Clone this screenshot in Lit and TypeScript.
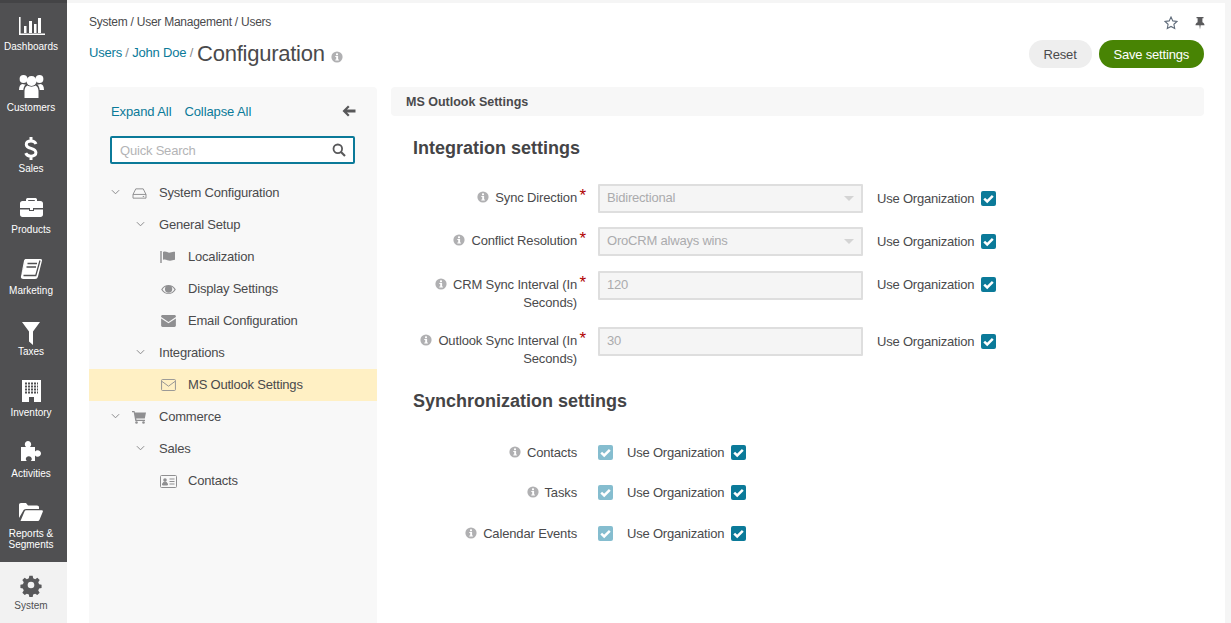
import { LitElement, html, css, svg } from 'lit';
import { customElement } from 'lit/decorators.js';

const info = html`<svg class="info" viewBox="0 0 12 12"><circle cx="6" cy="6" r="5.6" fill="#b0b0b2"/><rect x="5" y="2.4" width="2" height="1.8" fill="#fff"/><path d="M4.3 5h2.8v3.6h.8v1H4.3v-1h.9V6h-.9z" fill="#fff"/></svg>`;

const check = html`<svg viewBox="0 0 15 15"><path d="M3.2 7.6l3 2.9 5.6-5.700" fill="none" stroke="#fff" stroke-width="2.500"/></svg>`;

// drawn on a 32x28 box, centred over the label
const navIcons: Record<string, unknown> = {
  dashboards: svg`<path d="M4.800 7v17.200H30" fill="none" stroke="#fff" stroke-width="1.600"/><path d="M9 16h2.500v7H9zM14 11h3v12h-3zM19 14h2.500v9H19zM23 8h3v15h-3z" fill="#fff"/>`,
  customers: svg`<g fill="#fff"><circle cx="8.500" cy="8" r="3.900"/><circle cx="24.500" cy="8" r="3.900"/><circle cx="16.500" cy="10" r="5"/><path d="M4 19c0-4 1.500-6 3.500-6 1 .6 2.500.6 3.400.2-1.500 1.300-2.400 3.300-2.600 5.800zM29 19c0-4-1.500-6-3.500-6-1 .6-2.500.6-3.400.2 1.500 1.300 2.400 3.300 2.600 5.800z"/><path d="M9.500 27v-7c0-3 1.500-5 3-5.500 2 1.500 6 1.500 8 0 1.500.5 3 2.500 3 5.500v7z"/></g>`,
  sales: svg`<path d="M21 12c-.8-2-2.500-3-5-3-3 0-4.700 1.400-4.700 3.400 0 5 9.600 3 9.600 8.200 0 2.400-2 3.600-5 3.600-2.500 0-4.300-1-5.200-3M16 5v4M16 24v4" fill="none" stroke="#fff" stroke-width="3"/>`,
  products: svg`<path d="M11 8V6.500C11 5.500 12 5 13 5h7c1 0 2 .5 2 1.500V8h-2.200V7h-6.600v1z" fill="#fff"/><path d="M7.500 8h18C27 8 28 9 28 10.500V15H5v-4.500C5 9 6 8 7.500 8zM5 16.500h9V18h5v-1.500h9v5c0 1.500-1 2.500-2.500 2.500h-18C6 24 5 23 5 21.500z" fill="#fff"/><rect x="15" y="15" width="3" height="2" fill="#fff"/>`,
  marketing: svg`<path d="M11 5h14.500c1.300 0 1.800.8 1.400 2L23 22.500c-.5 1.700-1.300 2.500-3 2.500H8.500C6.500 25 5.500 24 6 22z M11 5c-1 0-1.700.6-2 1.700L6.200 21" fill="#fff"/><path d="M12.500 9.500h9.500M11.500 13h9.500M8.500 21.500h12.300L25 6.500" fill="none" stroke="#505052" stroke-width="1.300"/>`,
  taxes: svg`<path d="M7 7h18l-7 9.500V30l-4-3.500V16.500z" fill="#fff"/>`,
  inventory: svg`<path d="M7 4h19v22h-7v-5h-5v5H7z" fill="#fff"/><path d="M10 7.500h13M10 10.500h13M10 13.500h13M10 16.500h13" stroke="#505052" stroke-width="1.800" stroke-dasharray="2 1" fill="none"/>`,
  activities: svg`<path d="M6 10h5c-.8-.8-1.200-1.500-1.200-2.500C9.800 5.500 11.300 4 13 4s3.200 1.500 3.200 3.500c0 1-.4 1.700-1.200 2.500h5v4.500c.8-.8 1.600-1.200 2.500-1.200 2 0 3.500 1.400 3.500 3.200s-1.500 3.200-3.500 3.200c-.9 0-1.700-.4-2.500-1.200V24h-4.200c.7-.7 1-1.400 1-2.100 0-1.500-1.400-2.700-3-2.700s-3 1.200-3 2.700c0 .7.300 1.400 1 2.100H6z" fill="#fff"/>`,
  reports: svg`<path d="M4 21V8c0-1.100.7-2 2-2h5l2 2.500h9c1.200 0 2 .7 2 1.800V12H11c-1.300 0-2.300.7-2.800 1.800z" fill="#fff"/><path d="M5.500 24l4-9.500c.4-.9 1-1.300 2-1.300h15c1.200 0 1.700.7 1.300 1.600l-3.300 7.900c-.4.900-1 1.300-2 1.300z" fill="#fff"/>`,
};

const gear = html`<svg viewBox="0 0 24 24"><path fill="#58585a" fill-rule="evenodd" d="M10 1h4l.6 3 2.400 1 2.600-1.700 2.800 2.800-1.700 2.600 1 2.400 3 .6v4l-3 .6-1 2.400 1.700 2.600-2.800 2.800-2.600-1.700-2.400 1-.6 3h-4l-.6-3-2.400-1-2.600 1.700-2.800-2.800 1.700-2.600-1-2.400-3-.6v-4l3-.6 1-2.400-1.700-2.600 2.800-2.800 2.600 1.700 2.400-1zM12 8a4 4 0 100 8 4 4 0 000-8z"/></svg>`;

const treeIcons: Record<string, unknown> = {
  drive: html`<svg viewBox="0 0 16 14" width="15" height="13"><path d="M4 2h8l3 6v4H1V8zM1 8h14M11.500 10.200h1.500" fill="none" stroke="#8a8a8c" stroke-width="1"/></svg>`,
  flag: html`<svg viewBox="0 0 16 14" width="16" height="14"><path d="M1 1v12" stroke="#8f8f91" stroke-width="1.400"/><path d="M3 2c3-1.500 4.500 1 7 .6 2-.3 3-.8 5-.8v8c-2 0-3 1-5 1-2.500 0-4-2-7-1z" fill="#8f8f91"/></svg>`,
  eye: html`<svg viewBox="0 0 16 12" width="15" height="11"><path fill="#8f8f91" fill-rule="evenodd" d="M0 6c2-3.500 5-5 8-5s6 1.500 8 5c-2 3.500-5 5-8 5S2 9.500 0 6zM1.500 6C3 8.500 5.200 10 8 10s5-1.500 6.500-4C13.600 4.500 12.500 3.400 11.200 2.800c.6.800.9 1.700.9 2.700a4 4 0 11-8 0c0-1 .3-1.900.9-2.700C3.500 3.400 2.400 4.500 1.500 6z"/></svg>`,
  mail: html`<svg viewBox="0 0 16 13" width="15" height="12"><path fill="#8f8f91" d="M0 1.500C0 .7.700 0 1.500 0h13c.8 0 1.500.7 1.500 1.500v.7L8 7.500 0 2.200zM0 3.700l8 5.300 8-5.300v7.800c0 .8-.7 1.500-1.500 1.500h-13C.7 13 0 12.300 0 11.500z"/></svg>`,
  mailo: html`<svg viewBox="0 0 16 13" width="15" height="12"><path d="M1.500.5h13c.6 0 1 .4 1 1v10c0 .6-.4 1-1 1h-13c-.6 0-1-.4-1-1v-10c0-.6.4-1 1-1zM.8 2.500L8 7.800l7.200-5.300" fill="none" stroke="#8f8f91"/></svg>`,
  cart: html`<svg viewBox="0 0 14 13" width="14" height="13"><path fill="#8f8f91" d="M0 0h2.500l.4 1.500H14l-1.200 6H4.200l.3 1.300H13V10H3.300L1.700 1.200H0z"/><circle cx="4.500" cy="11.500" r="1.300" fill="#8f8f91"/><circle cx="11.500" cy="11.500" r="1.300" fill="#8f8f91"/></svg>`,
  card: html`<svg viewBox="0 0 17 13" width="17" height="13"><rect x=".5" y=".5" width="16" height="12" rx="1" fill="none" stroke="#8f8f91"/><circle cx="5" cy="5" r="1.800" fill="#8f8f91"/><path d="M2.500 10c0-2 1-3 2.500-3s2.500 1 2.500 3zM9.500 4h5M9.500 6.500h5M9.500 9h5" fill="#8f8f91" stroke="#8f8f91"/></svg>`,
};

const chevron = html`<svg viewBox="0 0 10 6" width="9" height="6"><path d="M1 1l4 4 4-4" fill="none" stroke="#8a8a8c" stroke-width="1.100"/></svg>`;

interface TreeRow { label: string; level: number; icon?: string; open?: boolean; active?: boolean }

const tree: TreeRow[] = [
  { label: 'System Configuration', level: 0, icon: 'drive', open: true },
  { label: 'General Setup', level: 1, open: true },
  { label: 'Localization', level: 2, icon: 'flag' },
  { label: 'Display Settings', level: 2, icon: 'eye' },
  { label: 'Email Configuration', level: 2, icon: 'mail' },
  { label: 'Integrations', level: 1, open: true },
  { label: 'MS Outlook Settings', level: 2, icon: 'mailo', active: true },
  { label: 'Commerce', level: 0, icon: 'cart', open: true },
  { label: 'Sales', level: 1, open: true },
  { label: 'Contacts', level: 2, icon: 'card' },
];

const nav = [
  ['Dashboards', 'dashboards'], ['Customers', 'customers'], ['Sales', 'sales'], ['Products', 'products'],
  ['Marketing', 'marketing'], ['Taxes', 'taxes'], ['Inventory', 'inventory'], ['Activities', 'activities'],
];

@customElement('app-root')
export class AppRoot extends LitElement {
  static styles = css`
    :host {
      display: block;
      height: 623px;
      overflow: hidden;
      font-family: "Liberation Sans", Arial, sans-serif;
      font-size: 13px;
      color: #4a4a4c;
      letter-spacing: -0.2px;
    }
    .page { display: flex; height: 623px; border-top: 3px solid #f5f5f5; box-sizing: border-box; }
    .nav { width: 67px; flex: none; background: #505052; display: flex; flex-direction: column; margin-top: -3px; border-top: 3px solid #444446; }
    .nav-item { height: 61px; flex: none; box-sizing: border-box; padding: 7px 5px 0 0; display: flex; flex-direction: column; align-items: center; color: #fff; font-size: 10px; letter-spacing: 0; line-height: 11px; text-align: center; }
    .nav-item svg { width: 32px; height: 28px; flex: none; margin-bottom: 3px; overflow: visible; }
    .nav-item.reports { height: 71px; padding-top: 6px; }
    .nav-item.system { flex: 1; background: #f2f2f2; color: #505052; padding-top: 13px; }
    .nav-item.system svg { width: 20px; height: 20px; margin-bottom: 5px; }
    .main { flex: 1; min-width: 0; display: flex; flex-direction: column; padding: 0 21px 0 22px; border-right: 6px solid #f5f5f5; box-sizing: border-box; }
    .crumbs { display: flex; justify-content: space-between; align-items: center; height: 18px; margin-top: 10px; font-size: 12px; letter-spacing: -0.25px; }
    .top-icons { display: flex; gap: 16px; margin-right: -2px; align-items: center; padding-top: 2px; }
    .title-row { display: flex; justify-content: space-between; align-items: center; height: 40px; margin-top: 3px; }
    .title { display: flex; align-items: center; color: #0b7a99; }
    .title h1 { font-weight: 400; font-size: 22px; letter-spacing: -0.25px; color: #4a4a4c; margin: 0 6px 0 4px; }
    .title .links { margin-top: -4px; }
    .title .sep { color: #8a8a8c; }
    .title .info { margin-top: 6px; }
    .info { width: 12px; height: 12px; flex: none; }
    .btns { display: flex; gap: 7px; }
    button { border: 0; height: 28px; border-radius: 14px; font: inherit; letter-spacing: inherit; padding: 0 15px; }
    .reset { background: #eeeeee; color: #4a4a4c; }
    .save { background: #488404; color: #fff; }
    .body { display: flex; flex: 1; margin-top: 13px; min-height: 0; gap: 14px; }
    .side { width: 288px; flex: none; background: #f8f8f8; border-radius: 4px 4px 0 0; padding-top: 15px; box-sizing: border-box; }
    .side-top { display: flex; align-items: center; height: 18px; padding: 0 21px 0 22px; color: #0b7a99; gap: 13px; letter-spacing: -0.1px; }
    .side-top svg { margin-left: auto; }
    .search { margin: 16px 22px 0 21px; height: 28px; border: 2px solid #0b7a99; border-radius: 2px; background: #fff; display: flex; align-items: center; justify-content: space-between; padding: 0 7px 0 8px; box-sizing: border-box; color: #b4b4b6; }
    .tree { margin-top: 13px; }
    .row { height: 32px; display: flex; align-items: center; position: relative; }
    .row.active { background: #fff0c4; }
    .chev-box { position: absolute; top: 12px; display: flex; }
    .row-icon { position: absolute; display: flex; justify-content: center; width: 18px; }
    .row-label { position: absolute; margin-top: -2px; }
    .content { flex: 1; min-width: 0; }
    .content-head { height: 29px; background: #f7f7f7; border-radius: 4px; display: flex; align-items: center; padding-left: 15px; font-weight: 700; font-size: 12.500px; letter-spacing: 0; }
    h2 { font-size: 18px; font-weight: 700; letter-spacing: 0; margin: 0 0 0 22px; line-height: 24px; color: #444446; }
    .sec1 { margin-top: 20px; }
    .fields { margin-top: 24px; display: flex; flex-direction: column; gap: 13.400px; }
    .field { display: grid; grid-template-columns: 186px 265px 1fr; column-gap: 21px; align-items: start; min-height: 30px; }
    .lbl { text-align: right; line-height: 18px; padding: 5px 0 2px; position: relative; letter-spacing: -0.15px; }
    .lbl .star { position: absolute; right: -9px; top: 3px; color: #b00000; font-size: 17px; }
    .lbl .info { vertical-align: -1px; margin-right: 6px; }
    .ctrl { height: 29px; border: 2px solid #dedede; background: #f5f5f5; box-sizing: border-box; color: #ababad; display: flex; align-items: center; padding: 0 0 2px 7px; position: relative; border-radius: 1px; }
    .ctrl .caret { position: absolute; right: 7px; top: 10px; border: 5px solid transparent; border-top-color: #d4d4d4; border-bottom: 0; }
    .use { display: flex; align-items: center; height: 28px; gap: 7px; margin-left: -7px; }
    .cb { width: 15px; height: 15px; background: #0b7a99; border-radius: 2px; display: block; flex: none; }
    .cb.dim { background: #85bdcf; }
    .cb svg { display: block; width: 15px; height: 15px; }
    .sec2 { margin-top: 19px; }
    .fields2 { margin-top: 25px; display: flex; flex-direction: column; gap: 12.700px; }
    .field2 { display: grid; grid-template-columns: 186px 14px 1fr; column-gap: 21px; height: 28px; align-items: center; }
    .field2 .lbl { padding: 1px 0 0; }
    .field2 .use { margin-left: -6px; }
  `;

  private renderRow(r: TreeRow) {
    const chevX = r.level === 0 ? 22 : 47;
    return html`<div class="row ${r.active ? 'active' : ''}">
      ${r.open ? html`<span class="chev-box" style="left:${chevX}px">${chevron}</span>` : ''}
      ${r.icon ? html`<span class="row-icon" style="left:${r.level === 0 ? 41 : 70}px">${treeIcons[r.icon]}</span>` : ''}
      <span class="row-label" style="left:${r.level === 2 ? 99 : 70}px">${r.label}</span>
    </div>`;
  }

  private use() {
    return html`<div class="use"><span>Use Organization</span><span class="cb">${check}</span></div>`;
  }

  render() {
    return html`<div class="page">
      <nav class="nav">
        ${nav.map(([label, key]) => html`<div class="nav-item"><svg viewBox="0 0 32 28">${navIcons[key]}</svg>${label}</div>`)}
        <div class="nav-item reports"><svg viewBox="0 0 32 28">${navIcons.reports}</svg>Reports &amp;<br />Segments</div>
        <div class="nav-item system">${gear}System</div>
      </nav>
      <main class="main">
        <div class="crumbs">
          <span>System / User Management / Users</span>
          <span class="top-icons">
            <svg viewBox="0 0 14 14" width="14" height="14"><path d="M7 1l1.800 3.900 4.200.5-3.100 2.900.8 4.200L7 10.400l-3.700 2.100.8-4.200L1 5.400l4.200-.5z" fill="none" stroke="#5f6b7a" stroke-width="1.100"/></svg>
            <svg viewBox="0 0 12 14" width="12" height="14"><path d="M2.500 1h7v1.300H8.400v4c1.300.5 2.100 1.500 2.100 3H6.600L6 13.500 5.400 9.300H1.500c0-1.500.8-2.500 2.100-3v-4H2.500z" fill="#5a5a5c"/></svg>
          </span>
        </div>
        <div class="title-row">
          <div class="title"><span class="links">Users <span class="sep">/</span> John Doe <span class="sep">/</span></span><h1>Configuration</h1>${info}</div>
          <div class="btns"><button class="reset">Reset</button><button class="save">Save settings</button></div>
        </div>
        <div class="body">
          <aside class="side">
            <div class="side-top"><span>Expand All</span><span>Collapse All</span>
              <svg viewBox="0 0 14 12" width="14" height="12"><path d="M6 0.500L.5 6 6 11.500l1.600-1.600L5 7.400h8.500V4.600H5l2.600-2.500z" fill="#58585a"/></svg>
            </div>
            <div class="search"><span>Quick Search</span>
              <svg viewBox="0 0 14 14" width="14" height="14"><circle cx="5.800" cy="5.800" r="4.300" fill="none" stroke="#58585a" stroke-width="1.800"/><path d="M9 9l4 4" stroke="#58585a" stroke-width="2.200"/></svg>
            </div>
            <div class="tree">${tree.map((r) => this.renderRow(r))}</div>
          </aside>
          <section class="content">
            <div class="content-head">MS Outlook Settings</div>
            <h2 class="sec1">Integration settings</h2>
            <div class="fields">
              <div class="field"><div class="lbl">${info}Sync Direction<span class="star">*</span></div><div class="ctrl">Bidirectional<i class="caret"></i></div>${this.use()}</div>
              <div class="field"><div class="lbl">${info}Conflict Resolution<span class="star">*</span></div><div class="ctrl">OroCRM always wins<i class="caret"></i></div>${this.use()}</div>
              <div class="field"><div class="lbl">${info}CRM Sync Interval (In Seconds)<span class="star">*</span></div><div class="ctrl">120</div>${this.use()}</div>
              <div class="field"><div class="lbl">${info}Outlook Sync Interval (In Seconds)<span class="star">*</span></div><div class="ctrl">30</div>${this.use()}</div>
            </div>
            <h2 class="sec2">Synchronization settings</h2>
            <div class="fields2">
              ${['Contacts', 'Tasks', 'Calendar Events'].map((l) => html`<div class="field2"><div class="lbl">${info}${l}</div><span class="cb dim">${check}</span>${this.use()}</div>`)}
            </div>
          </section>
        </div>
      </main>
    </div>`;
  }
}
